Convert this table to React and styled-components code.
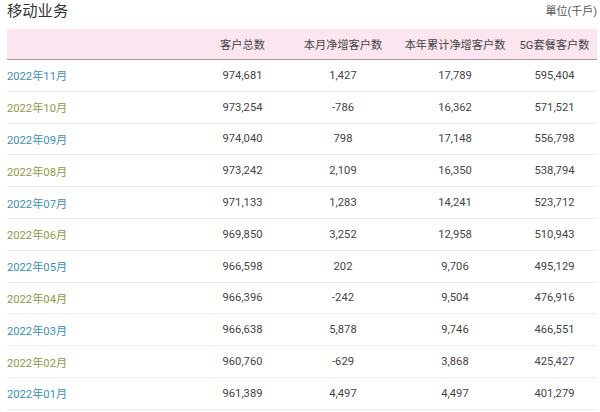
import React from 'react';
import styled, { createGlobalStyle } from 'styled-components';

const GlobalStyle = createGlobalStyle`
  body {
    margin: 0;
    background: #ffffff;
    font-family: Roboto, "Noto Sans CJK SC", sans-serif;
  }
`;

const Page = styled.div`
  width: 600px;
  height: 412px;
  overflow: hidden;
  padding: 0 3px 0 7px;
  box-sizing: border-box;
`;

const TitleBar = styled.div`
  display: flex;
  justify-content: space-between;
  align-items: flex-start;
  height: 29px;
`;

const Title = styled.h2`
  margin: 0;
  padding-top: 1px;
  font-size: 15.3px;
  line-height: 20px;
  font-weight: 400;
  color: #333333;
`;

const Unit = styled.span`
  font-size: 11px;
  line-height: 14px;
  padding-top: 5px;
  color: #555555;
`;

const Row = styled.div`
  display: grid;
  grid-template-columns: 190px 91px 110px 114px 85px;
  align-items: center;
  height: ${({ head }) => (head ? '30px' : '30.8px')};
  background: ${({ head }) => (head ? '#fbe5f0' : 'transparent')};
  border-bottom: 1px solid ${({ head }) => (head ? '#a99aa1' : '#ececec')};
  font-size: 11.2px;
  color: #444444;
`;

const Cell = styled.div`
  text-align: center;
  white-space: nowrap;
`;

const DateCell = styled.div`
  text-align: left;
  white-space: nowrap;
  color: ${({ tone }) => (tone === 'blue' ? '#3b8fb6' : '#8b9b48')};
`;

const rows = [
  ['2022年11月', '974,681', '1,427', '17,789', '595,404'],
  ['2022年10月', '973,254', '-786', '16,362', '571,521'],
  ['2022年09月', '974,040', '798', '17,148', '556,798'],
  ['2022年08月', '973,242', '2,109', '16,350', '538,794'],
  ['2022年07月', '971,133', '1,283', '14,241', '523,712'],
  ['2022年06月', '969,850', '3,252', '12,958', '510,943'],
  ['2022年05月', '966,598', '202', '9,706', '495,129'],
  ['2022年04月', '966,396', '-242', '9,504', '476,916'],
  ['2022年03月', '966,638', '5,878', '9,746', '466,551'],
  ['2022年02月', '960,760', '-629', '3,868', '425,427'],
  ['2022年01月', '961,389', '4,497', '4,497', '401,279'],
];

export default function App() {
  return (
    <>
      <GlobalStyle />
      <Page>
        <TitleBar>
          <Title>移动业务</Title>
          <Unit>單位(千戶)</Unit>
        </TitleBar>
        <Row head>
          <div />
          <Cell>客户总数</Cell>
          <Cell>本月净增客户数</Cell>
          <Cell>本年累计净增客户数</Cell>
          <Cell>5G套餐客户数</Cell>
        </Row>
        {rows.map((r, i) => (
          <Row key={r[0]}>
            <DateCell tone={i % 2 === 0 ? 'blue' : 'green'}>{r[0]}</DateCell>
            <Cell>{r[1]}</Cell>
            <Cell>{r[2]}</Cell>
            <Cell>{r[3]}</Cell>
            <Cell>{r[4]}</Cell>
          </Row>
        ))}
      </Page>
    </>
  );
}
